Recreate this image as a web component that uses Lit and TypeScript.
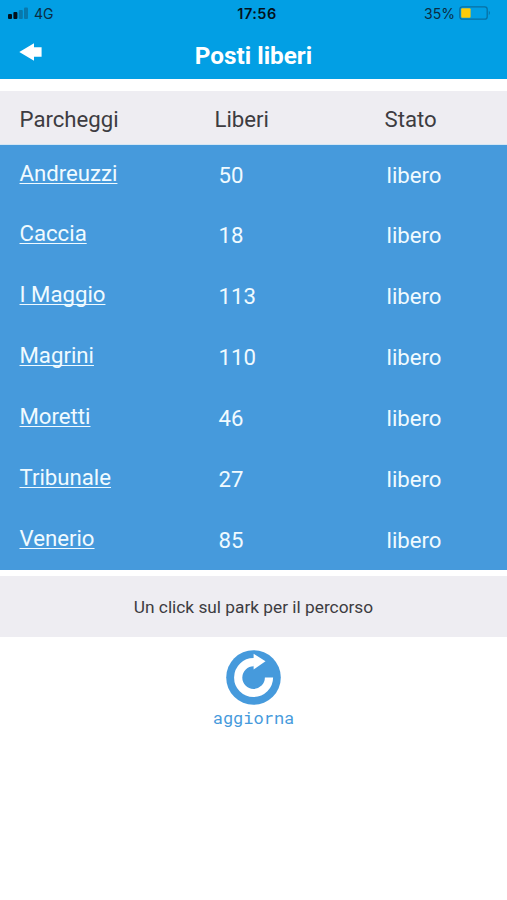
import { LitElement, html, css } from "lit";
import { customElement, property } from "lit/decorators.js";

interface Park {
  name: string;
  free: number;
  state: string;
}

const PARKS: Park[] = [
  { name: "Andreuzzi", free: 50, state: "libero" },
  { name: "Caccia", free: 18, state: "libero" },
  { name: "I Maggio", free: 113, state: "libero" },
  { name: "Magrini", free: 110, state: "libero" },
  { name: "Moretti", free: 46, state: "libero" },
  { name: "Tribunale", free: 27, state: "libero" },
  { name: "Venerio", free: 85, state: "libero" },
];

@customElement("status-bar")
export class StatusBar extends LitElement {
  static styles = css`
    :host {
      display: grid;
      grid-template-columns: 1fr auto 1fr;
      align-items: center;
      height: 28px;
      padding: 0 16px 2px 8px;
      box-sizing: border-box;
      font-family: Inter, "Liberation Sans", sans-serif;
      font-size: 14px;
      color: #0b2c42;
    }
    .left,
    .right {
      display: flex;
      align-items: center;
    }
    .left {
      gap: 6px;
    }
    .right {
      justify-content: flex-end;
      gap: 4px;
    }
    .time {
      font-weight: 600;
      font-size: 14.5px;
      letter-spacing: 0.45px;
      color: #03121c;
      margin-left: 15px;
    }
    svg {
      display: block;
    }
  `;
  render() {
    return html`
      <div class="left">
        <svg width="20" height="12" viewBox="0 0 20 12">
          <rect x="0" y="7" width="4" height="5" rx="1" fill="#04121c" />
          <rect x="5.4" y="5" width="4" height="7" rx="1" fill="#04121c" />
          <rect x="10.8" y="3" width="4" height="9" rx="1" fill="#0878ac" />
          <rect x="16" y="0.5" width="4" height="11.5" rx="1" fill="#0878ac" />
        </svg>
        <span>4G</span>
      </div>
      <span class="time">17:56</span>
      <div class="right">
        <span>35%</span>
        <svg width="32" height="14" viewBox="0 0 32 14">
          <rect x="0.8" y="0.8" width="27.4" height="12.4" rx="2.5" fill="none" stroke="#0870a3" stroke-width="1.3" />
          <rect x="2.2" y="2.2" width="9.4" height="9.6" rx="1" fill="#fccb0a" />
          <path d="M29.8 4.8 Q32 7 29.8 9.2 Z" fill="#0870a3" />
        </svg>
      </div>
    `;
  }
}

@customElement("park-row")
export class ParkRow extends LitElement {
  @property({ attribute: false }) park!: Park;
  static styles = css`
    :host {
      display: grid;
      grid-template-columns: 199px 168px 1fr;
      align-items: start;
      padding: 14px 0 0 19.5px;
      box-sizing: border-box;
      font-size: 22.2px;
      line-height: 28px;
      color: #f0faff;
    }
    .name {
      color: inherit;
      justify-self: start;
      text-decoration: underline;
      text-decoration-thickness: 1px;
      text-underline-offset: 1.5px;
      text-decoration-skip-ink: none;
    }
    .free,
    .state {
      padding-top: 2px;
    }
  `;
  render() {
    return html`
      <a class="name" href="#">${this.park.name}</a>
      <span class="free">${this.park.free}</span>
      <span class="state">${this.park.state}</span>
    `;
  }
}

@customElement("app-root")
export class AppRoot extends LitElement {
  static styles = css`
    :host {
      display: block;
      min-height: 900px;
      background: #fff;
      font-family: Roboto, "Liberation Sans", sans-serif;
    }
    .top {
      height: 79px;
      background: #029fe4;
    }
    .bar {
      display: grid;
      grid-template-columns: 1fr auto 1fr;
      align-items: start;
      padding-left: 19px;
      padding-right: 19px;
    }
    .back {
      display: block;
      margin-top: 15px;
    }
    h1 {
      margin: 14px 0 0;
      font-size: 24.3px;
      line-height: 28px;
      font-weight: 700;
      color: #fff;
    }
    .heads {
      display: grid;
      grid-template-columns: 195px 170px 1fr;
      align-items: center;
      height: 54px;
      margin-top: 12px;
      padding: 3px 0 0 19.5px;
      box-sizing: border-box;
      background: #eeedf2;
      border-bottom: 1px solid #d3e6f4;
      font-size: 22.2px;
      color: #3d3c41;
    }
    .table {
      display: grid;
      grid-template-rows: 60px repeat(6, 61px);
      height: 425px;
      overflow: hidden;
      background: #469adc;
    }
    .hint {
      display: flex;
      align-items: center;
      justify-content: center;
      height: 61px;
      margin-top: 6px;
      background: #eeedf2;
      font-size: 17.3px;
      color: #3d3c41;
    }
    .refresh {
      display: flex;
      flex-direction: column;
      align-items: center;
      padding-top: 13px;
    }
    .refresh svg {
      display: block;
    }
    .label {
      margin-top: 3px;
      font-family: "Roboto Mono", "DejaVu Sans Mono", monospace;
      font-size: 17px;
      line-height: 20px;
      color: #469adc;
    }
  `;
  render() {
    return html`
      <header class="top">
        <status-bar></status-bar>
        <div class="bar">
          <svg class="back" width="23" height="18" viewBox="0 0 23 18">
            <path d="M0.3 9 L15 0.3 V4.3 H22.6 V13.8 H15 V17.7 Z" fill="#fff" />
          </svg>
          <h1>Posti liberi</h1>
        </div>
      </header>
      <div class="heads">
        <span>Parcheggi</span><span>Liberi</span><span>Stato</span>
      </div>
      <div class="table">
        ${PARKS.map((p) => html`<park-row .park=${p}></park-row>`)}
      </div>
      <div class="hint">Un click sul park per il percorso</div>
      <div class="refresh">
        <svg width="55" height="55" viewBox="0 0 55 55">
          <circle cx="27.5" cy="27.5" r="27.3" fill="#469adc" />
          <path d="M43 27.5 A15.4 15.4 0 1 1 28 12.2" fill="none" stroke="#fff" stroke-width="8.2" />
          <path d="M27.6 3.8 L39.5 11.3 L27.6 19.4 Z" fill="#fff" />
        </svg>
        <span class="label">aggiorna</span>
      </div>
    `;
  }
}
